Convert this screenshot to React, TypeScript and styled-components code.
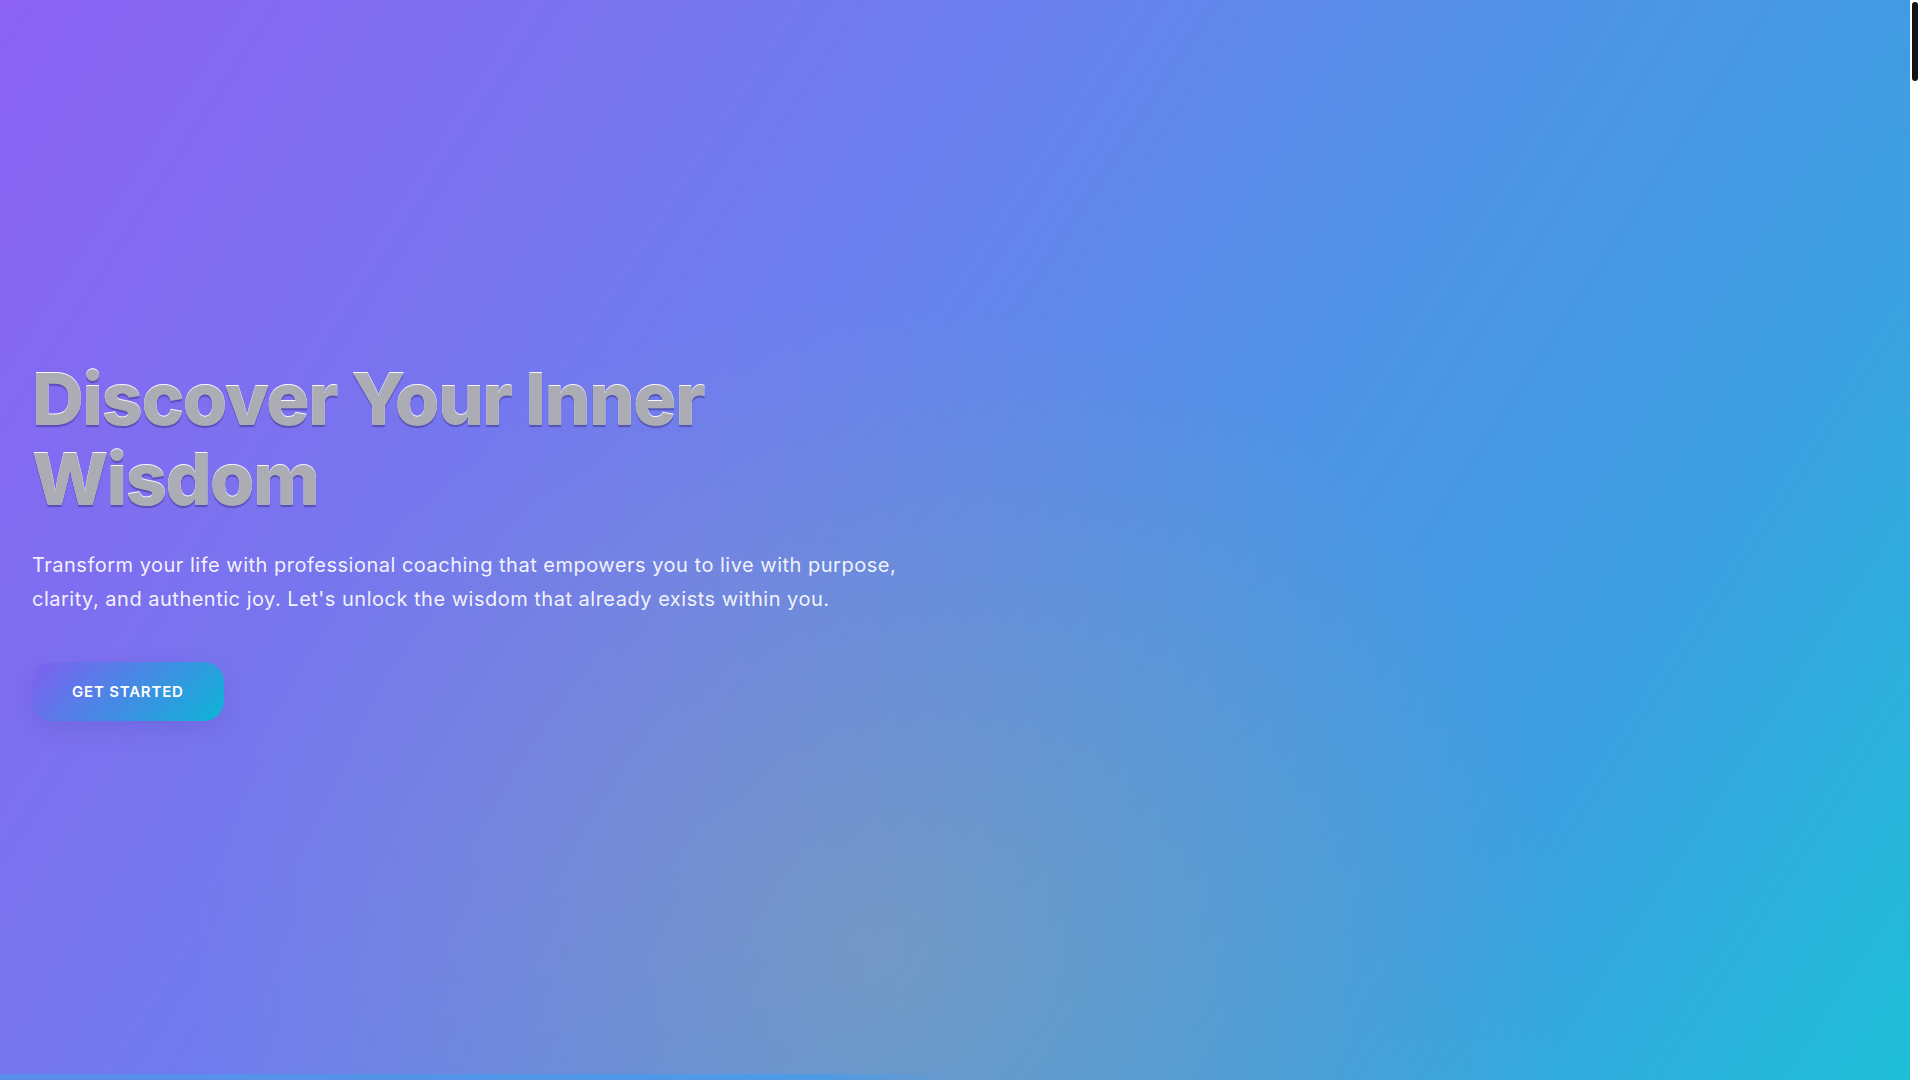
import React from "react";
import styled, { createGlobalStyle } from "styled-components";

const GlobalStyle = createGlobalStyle`
  *, *::before, *::after { box-sizing: border-box; }
  html, body { margin: 0; padding: 0; height: 100%; overflow: hidden; }
  body {
    font-family: Inter, "Noto Sans", "Liberation Sans", sans-serif;
    background: #ffffff;
    color: #1f2937;
  }
`;

const Shell = styled.div`
  display: flex;
  height: 100vh;
  background: #ffffff;
`;

const Main = styled.main`
  flex: 1;
  min-width: 0;
  height: 100vh;
  overflow-y: auto;
  overflow-x: hidden;
  scrollbar-width: none;
  &::-webkit-scrollbar { display: none; }
`;

const ScrollRail = styled.div`
  flex: 0 0 10px;
  height: 100vh;
  background: #ffffff;
  padding: 2px 2px 0;
`;

const ScrollThumb = styled.div`
  width: 6px;
  height: 79px;
  border-radius: 3px;
  background: #141414;
`;

const Hero = styled.section`
  position: relative;
  height: 100vh;
  display: flex;
  align-items: center;
  padding: 0 32px;
  overflow: hidden;
  background:
    radial-gradient(ellipse 36% 60% at 46% 88%, rgba(190, 170, 120, 0.3), rgba(190, 170, 120, 0) 100%),
    linear-gradient(123deg, #8c62f4 0%, #7b72ef 22%, #6a80ee 40%, #4f93e6 60%, #3d9fe2 78%, #1ebfd8 100%);
`;

const HeroGrid = styled.div`
  width: 100%;
  display: grid;
  grid-template-columns: 1fr 1fr;
  gap: 48px;
`;

const HeroContent = styled.div`
  display: flex;
  flex-direction: column;
  align-items: flex-start;
`;

const Title = styled.h1`
  margin: 0 0 30px;
  font-family: Inter, "Liberation Sans", sans-serif;
  font-size: 72px;
  font-weight: 800;
  line-height: 1.1;
  letter-spacing: -0.02em;
  color: #abacb4;
  text-shadow:
    0 -1.5px 0 rgba(255, 255, 255, 0.95),
    0 2px 1px rgba(60, 50, 140, 0.55);
`;

const Lead = styled.p`
  margin: 0 0 46px;
  font-size: 20px;
  line-height: 1.7;
  font-weight: 400;
  letter-spacing: 0.5px;
  color: rgba(255, 255, 255, 0.92);
`;

const CtaButton = styled.a`
  display: inline-flex;
  align-items: center;
  justify-content: center;
  height: 59px;
  padding: 0 40px;
  border-radius: 20px;
  background: linear-gradient(135deg, #8060f0 0%, #4b86e6 45%, #0cb5d6 100%);
  color: #ffffff;
  font-size: 15px;
  font-weight: 600;
  letter-spacing: 0.8px;
  text-transform: uppercase;
  text-decoration: none;
  box-shadow: 0 8px 22px rgba(70, 60, 170, 0.18);
  cursor: pointer;
`;

const BottomBar = styled.div`
  position: absolute;
  left: 0;
  bottom: 0;
  width: 50%;
  height: 6px;
  background: linear-gradient(90deg, #5b8dea 0%, #4d9be7 85%, rgba(77, 155, 231, 0) 100%);
`;

const Rest = styled.section`
  min-height: 12960px;
  background: #ffffff;
`;

export default function App() {
  return (
    <Shell>
      <GlobalStyle />
      <Main>
        <Hero>
          <HeroGrid>
            <HeroContent>
              <Title>Discover Your Inner Wisdom</Title>
              <Lead>
                Transform your life with professional coaching that empowers you to live with purpose,
                clarity, and authentic joy. Let's unlock the wisdom that already exists within you.
              </Lead>
              <CtaButton href="#contact">Get Started</CtaButton>
            </HeroContent>
            <div />
          </HeroGrid>
          <BottomBar />
        </Hero>
        <Rest />
      </Main>
      <ScrollRail>
        <ScrollThumb />
      </ScrollRail>
    </Shell>
  );
}
